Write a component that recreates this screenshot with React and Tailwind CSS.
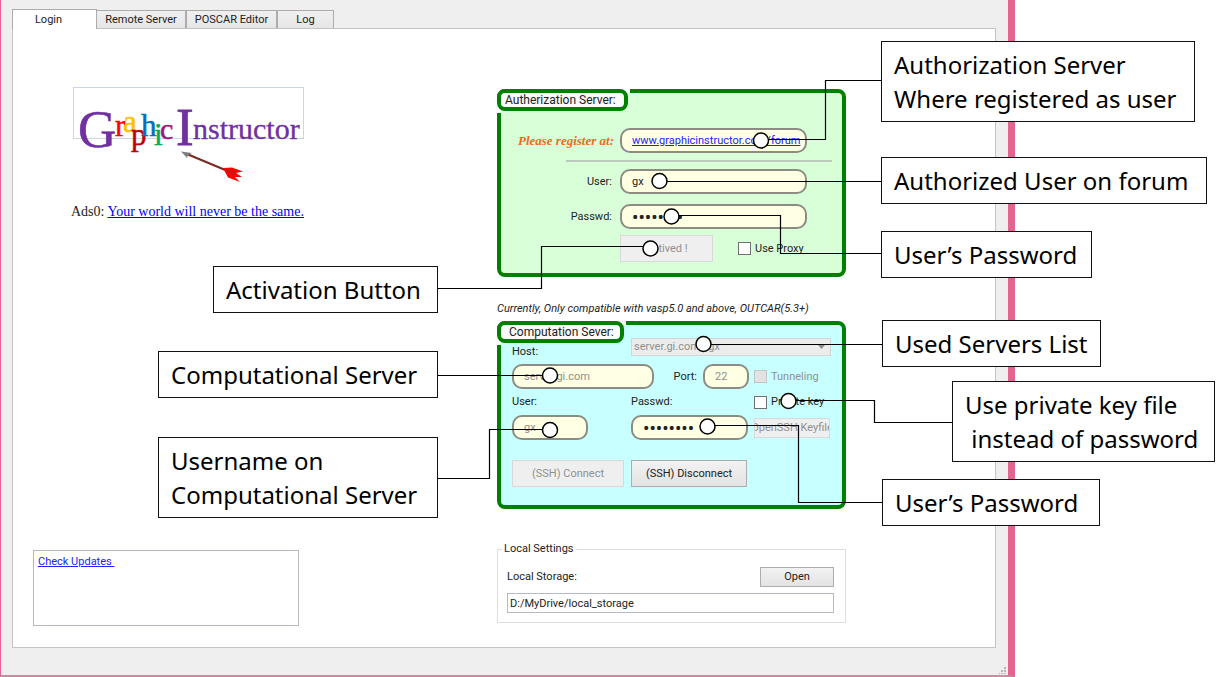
import React from "react";

const pill =
  "h-[25px] min-w-0 rounded-[10px] border-2 border-[#8c8c84] bg-[#ffffe3] px-[10px] outline-none";
const flatButton =
  "border border-[#d9d9d9] bg-[#efefef] text-[#8f8f8f] overflow-hidden whitespace-nowrap";
const raisedButton =
  "border border-[#adadad] bg-linear-to-b from-[#f2f2f2] to-[#e3e3e3] text-[#222]";

function Tab({ children, className }) {
  return (
    <button
      type="button"
      role="tab"
      className={
        "h-[18px] border border-b-0 border-[#acacac] bg-linear-to-b from-[#f0f0f0] to-[#e6e6e6] leading-4 " +
        className
      }
    >
      {children}
    </button>
  );
}

function Panel({ title, titleClass, tone, header, children }) {
  return (
    <section
      className={
        "h-[188px] rounded-[8px] border-4 border-[#008000] " + tone
      }
    >
      <div className="-mt-1 -ml-1 flex h-[23px] items-start">
        <div className="relative h-[22px]">
          <span className="absolute top-0 -right-[2px] h-1 w-[10px] bg-white" />
          <span className="absolute -bottom-[2px] left-0 h-[10px] w-1 bg-white" />
          <h2
            className={
              "relative h-[22px] rounded-[8px] border-4 border-[#008000] bg-[#fafafa] text-[12px] leading-[14px] whitespace-nowrap " +
              titleClass
            }
          >
            {title}
          </h2>
        </div>
        {header}
      </div>
      {children}
    </section>
  );
}

function Check({ id, label, disabled }) {
  return (
    <div className="flex items-center gap-1">
      <input
        id={id}
        type="checkbox"
        disabled={disabled}
        className="size-[13px] appearance-none border border-[#707070] bg-white disabled:border-[#c4c4c4] disabled:bg-[#e2e2e2]"
      />
      <label
        htmlFor={id}
        className={disabled ? "whitespace-nowrap text-[#8f8f8f]" : "whitespace-nowrap"}
      >
        {label}
      </label>
    </div>
  );
}

function Logo() {
  return (
    <svg width="240" height="104" viewBox="0 0 240 104" role="img" aria-label="Graphic Instructor">
      <rect x="3.5" y="1.5" width="230" height="51" fill="none" stroke="#c9d6e6" />
      <g fontFamily="'Liberation Serif', serif">
        <text x="8" y="61" fontSize="53" fill="#7030a0" stroke="#7030a0" strokeWidth="0.6">G</text>
        <text x="45" y="50" fontSize="31" fill="#ff0000" stroke="#ff0000" strokeWidth="0.5">r</text>
        <text x="53" y="46" fontSize="31" fill="#ffc000" stroke="#ffc000" strokeWidth="0.5">a</text>
        <text x="61" y="59" fontSize="31" fill="#c00000" stroke="#c00000" strokeWidth="0.5">p</text>
        <text x="71" y="50" fontSize="31" fill="#0070c0" stroke="#0070c0" strokeWidth="0.5">h</text>
        <text x="84" y="59" fontSize="31" fill="#00b050" stroke="#00b050" strokeWidth="0.5">i</text>
        <text x="90" y="53" fontSize="30" fill="#a0157f" stroke="#a0157f" strokeWidth="0.5">c</text>
        <text x="106" y="59" fontSize="53" fill="#7030a0" stroke="#7030a0" strokeWidth="0.8">I</text>
        <text x="123" y="53" fontSize="30" fill="#7030a0" stroke="#7030a0" strokeWidth="0.3">nstructor</text>
      </g>
      <path d="M117 68 L160 86" stroke="#7a2b20" strokeWidth="2" />
      <path d="M111 65.5 L122 67 L118 69 L117 72 Z" fill="#7f7f7f" />
      <path d="M153 82 L162 81.5 L173 85.5 L166 87 L172 91 L165 91 L170 96 L158 91.5 Z" fill="#ff0000" />
      <path d="M156 84 L166 88" stroke="#b5221a" strokeWidth="2" />
    </svg>
  );
}

function Callout({ className, children }) {
  return (
    <div
      className={
        "absolute border border-[#111] bg-white px-3 pt-[6px] pb-[5px] font-['Noto_Sans','Open_Sans',sans-serif] text-[24px] leading-[34px] whitespace-pre text-black " +
        className
      }
    >
      {children}
    </div>
  );
}

const wires = [
  "M761 139.5H825.5V80.5H882",
  "M659 181.5H882",
  "M671 215.5H780.5V253.5H882",
  "M650 246.5H541.5V288.5H437",
  "M703 344.5H882",
  "M549 375.5H437",
  "M788 400.5H874.5V422.5H953",
  "M549 429.5H489.5V478.5H437",
  "M707 425.5H798.5V502.5H882",
];
const pins = [
  [761, 140.5], [659.5, 181], [671.5, 216.5], [650.5, 248.5], [703.5, 344],
  [550, 375.5], [788.5, 401], [550, 430], [707.5, 426.5],
];

export default function App() {
  return (
    <div className="relative min-h-screen overflow-hidden bg-white pr-[213px] font-[Roboto,'Noto_Sans',sans-serif] text-[11px] leading-4 text-[#222]">
      <main className="flex flex-col border-r-[7px] border-b-2 border-l border-r-[#e5648f] border-b-[#c78da0] border-l-[#e5648f] bg-[#efefef] pt-[9px] pr-3 pl-[11px]">
        <div role="tablist" className="flex items-end">
          <button
            type="button"
            role="tab"
            aria-selected="true"
            className="relative z-10 -mb-px h-5 w-[85px] border border-b-0 border-[#acacac] bg-white pr-3 leading-4"
          >
            Login
          </button>
          <Tab className="-ml-px w-[90px]">Remote Server</Tab>
          <Tab className="w-[91px]">POSCAR Editor</Tab>
          <Tab className="w-[57px]">Log</Tab>
        </div>

        <div className="flex items-stretch border border-[#c3c3c3] bg-white pb-6">
          <div className="flex w-[484px] shrink-0 flex-col justify-between pt-[57px] pl-5">
            <div className="pl-[37px]">
              <Logo />
              <p className="mt-3 pl-[1px] font-['Liberation_Serif',serif] text-[14px] leading-5">
                Ads0:{" "}
                <a href="#ads" className="text-[#0000ff] underline">
                  Your world will never be the same.
                </a>
              </p>
            </div>
            <div className="-mb-[3px] h-[76px] w-[266px] border border-[#b9b9c2] p-1 pt-[3px]">
              <a href="#updates" className="whitespace-pre text-[#2222ff] underline">
                {"Check Updates "}
              </a>
            </div>
          </div>

          <div className="flex w-[349px] shrink-0 flex-col pt-[60px]">
            <Panel title="Autherization Server:" titleClass="w-[131px] px-1" tone="bg-[#d9ffd9]">
              <div className="mt-4 grid grid-cols-[113px_187px] items-center gap-x-[6px]">
                <label
                  htmlFor="register"
                  className="text-right font-['Liberation_Serif',serif] text-[13px] font-bold whitespace-nowrap text-[#f26a21] italic"
                >
                  Please register at:
                </label>
                <div id="register" className={pill + " leading-[22px]"}>
                  <a href="#forum" className="text-[#2222ff] underline">
                    www.graphicinstructor.com/forum
                  </a>
                </div>
                <hr className="col-span-2 my-[7px] -mr-[25px] ml-[65px] border-t-2 border-[#bdc9bd]" />
                <label htmlFor="auth-user" className="pr-[2px] text-right">User:</label>
                <input id="auth-user" defaultValue="gx" className={pill} />
                <label htmlFor="auth-pass" className="mt-[10px] pr-[2px] text-right">Passwd:</label>
                <input
                  id="auth-pass"
                  type="password"
                  defaultValue="password"
                  className={pill + " mt-[10px] font-['Noto_Sans',sans-serif] text-[17px]"}
                />
              </div>
              <div className="mt-[6px] flex items-center gap-[25px] pl-[119px]">
                <button type="button" disabled className={flatButton + " h-[27px] w-[93px]"}>
                  Actived !
                </button>
                <Check id="proxy" label="Use Proxy" />
              </div>
            </Panel>

            <p className="mt-6 mb-1 whitespace-nowrap italic">
              Currently, Only compatible with vasp5.0 and above, OUTCAR(5.3+)
            </p>

            <Panel
              title="Computation Sever:"
              titleClass="w-[127px] px-2"
              tone="bg-[#c8ffff]"
              header={
                <div className="relative mt-[17px] mr-[11px] ml-auto w-[200px]">
                  <select
                    aria-label="Used servers"
                    disabled
                    className="block h-[18px] w-full appearance-none border border-[#d5d5d5] bg-[#ececec] px-[2px] leading-4 text-[#8f8f8f] opacity-100"
                  >
                    <option>server.gi.com - gx</option>
                  </select>
                  <svg className="absolute top-[7px] right-[6px]" width="7" height="4" viewBox="0 0 7 4">
                    <path d="M0 0H7L3.5 4Z" fill="#8f8f8f" />
                  </svg>
                </div>
              }
            >
              <div className="px-[11px]">
                <label htmlFor="host" className="block">Host:</label>
                <div className="mt-[4px] flex items-center">
                  <input
                    id="host"
                    disabled
                    defaultValue="server.gi.com"
                    className={pill + " w-[142px] text-[#8f8f8f]"}
                  />
                  <label htmlFor="port" className="ml-auto pr-[6px]">Port:</label>
                  <input
                    id="port"
                    disabled
                    defaultValue="22"
                    className={pill + " mr-[5px] w-[46px] text-[#8f8f8f]"}
                  />
                  <div className="w-[77px]">
                    <Check id="tunnel" label="Tunneling" disabled />
                  </div>
                </div>
                <div className="mt-[5px] flex items-center">
                  <label htmlFor="comp-user" className="w-[119px]">User:</label>
                  <label htmlFor="comp-pass" className="w-[123px]">Passwd:</label>
                  <Check id="private-key" label="Private key" />
                </div>
                <div className="mt-[5px] flex items-center">
                  <input
                    id="comp-user"
                    disabled
                    defaultValue="gx"
                    className={pill + " mr-[43px] w-[76px] text-[#8f8f8f]"}
                  />
                  <input
                    id="comp-pass"
                    type="password"
                    defaultValue="password"
                    className={pill + " mr-[6px] w-[117px] font-['Noto_Sans',sans-serif] text-[17px]"}
                  />
                  <button
                    type="button"
                    disabled
                    className={flatButton + " flex h-5 w-[76px] items-center justify-center"}
                  >
                    OpenSSH Keyfile
                  </button>
                </div>
                <div className="mt-5 flex gap-[7px]">
                  <button type="button" disabled className={flatButton + " h-[27px] w-[112px]"}>
                    (SSH) Connect
                  </button>
                  <button type="button" className={raisedButton + " h-[27px] w-[116px]"}>
                    (SSH) Disconnect
                  </button>
                </div>
              </div>
            </Panel>

            <fieldset className="mt-8 h-[82px] border border-[#dedede] pr-[11px] pl-[9px]">
              <legend className="-ml-[5px] px-[2px]">Local Settings</legend>
              <div className="mt-[10px] flex items-center justify-between">
                <label htmlFor="storage">Local Storage:</label>
                <button type="button" className={raisedButton + " h-5 w-[74px]"}>
                  Open
                </button>
              </div>
              <input
                id="storage"
                defaultValue="D:/MyDrive/local_storage"
                className="mt-[6px] h-5 w-full border border-[#b9b9c2] bg-white px-[2px] outline-none"
              />
            </fieldset>
          </div>
        </div>

        <footer className="-mr-3 flex h-[27px] items-end justify-end pr-[2px] pb-px">
          <svg width="7" height="7" viewBox="0 0 7 7" fill="#b5b5b5">
            <path d="M5 0h2v2h-2zM2 3h2v2h-2zM5 3h2v2h-2zM0 6h1v1h-1zM2 6h2v1h-2zM5 6h2v1h-2z" />
          </svg>
        </footer>
      </main>

      <svg
        className="pointer-events-none absolute top-0 left-0"
        width="1228"
        height="677"
        viewBox="0 0 1228 677"
        fill="none"
        stroke="#000"
      >
        {wires.map((d) => (
          <path key={d} d={d} strokeWidth="1.2" />
        ))}
        {pins.map(([x, y]) => (
          <circle key={x + "-" + y} cx={x} cy={y} r="7.5" fill="#fff" strokeWidth="1.5" />
        ))}
      </svg>

      <Callout className="top-[41px] left-[881px] w-[314px]">{"Authorization Server\nWhere registered as user"}</Callout>
      <Callout className="top-[157px] left-[881px] w-[326px]">Authorized User on forum</Callout>
      <Callout className="top-[231px] left-[881px] w-[211px]">User’s Password</Callout>
      <Callout className="top-[320px] left-[882px] w-[219px]">Used Servers List</Callout>
      <Callout className="top-[381px] left-[952px] w-[263px]">{"Use private key file\n instead of password"}</Callout>
      <Callout className="top-[479px] left-[882px] w-[218px]">User’s Password</Callout>
      <Callout className="top-[266px] left-[213px] w-[225px]">Activation Button</Callout>
      <Callout className="top-[351px] left-[158px] w-[280px]">Computational Server</Callout>
      <Callout className="top-[437px] left-[158px] w-[280px]">{"Username on\nComputational Server"}</Callout>
    </div>
  );
}
